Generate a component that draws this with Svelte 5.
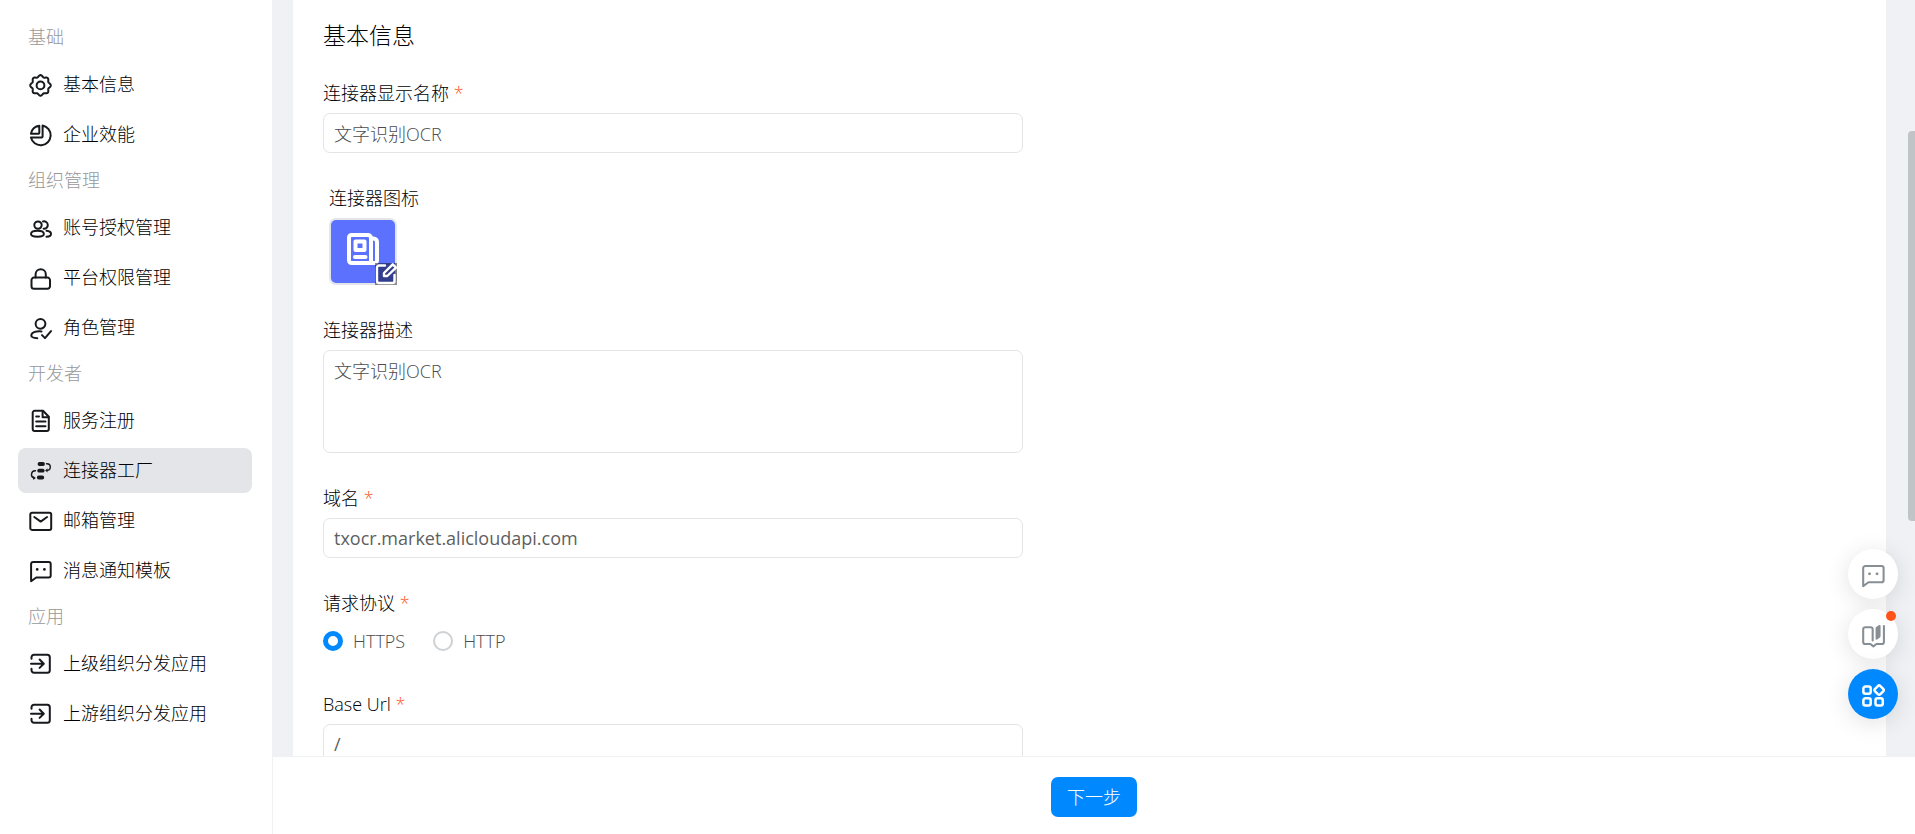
<script lang="ts">
  // Eight rounded teeth around the centre of a 24px box
  function gearPath(cx: number, cy: number, radius: number, depth: number) {
    const points: string[] = [];
    for (let i = 0; i < 96; i++) {
      const angle = (i / 96) * Math.PI * 2;
      const r = radius + depth * Math.cos(angle * 8);
      points.push(`${(cx + r * Math.cos(angle)).toFixed(2)} ${(cy + r * Math.sin(angle)).toFixed(2)}`);
    }
    return `M${points.join('L')}Z`;
  }

  type Icon = { lines: string[]; solid?: string[] };

  const icons: Record<string, Icon> = {
    gear: {
      lines: [gearPath(11.5, 12.4, 9.4, 0.9), 'M11.5 8.5a3.9 3.9 0 1 1 0 7.8a3.9 3.9 0 0 1 0-7.8z'],
    },
    pie: {
      lines: [
        'M13.6 2.4A10 10 0 1 1 1.9 14.4H12.6a1 1 0 0 0 1-1z',
        'M10.3 2.7V10a.8.8 0 0 1-.8.8H1.9C2.5 6.3 6 3 10.3 2.7z',
      ],
    },
    users: {
      lines: [
        'M9 5.4a3.7 3.7 0 1 1 0 7.4a3.7 3.7 0 0 1 0-7.4z',
        'M8.5 14.8c4.4 0 6.4 1.7 6.4 3.3s-2 2.7-6.4 2.7s-6.5-1.1-6.5-2.7s2.1-3.3 6.5-3.3z',
        'M14 5.5a3.7 3.7 0 1 1 .6 7.2',
        'M17.5 14.8c3 .3 4.5 1.6 4.5 3.2c0 1.7-1.6 2.6-4.5 2.8',
      ],
    },
    lock: {
      lines: [
        'M5 11.600H18.5a2.5 2.5 0 0 1 2.5 2.5V20.300a2.5 2.5 0 0 1-2.5 2.5H5A2.5 2.5 0 0 1 2.5 20.300V14.100A2.5 2.5 0 0 1 5 11.600z',
        'M6.600 11.600V8.300a5.1 5.1 0 0 1 10.2 0V11.600',
      ],
    },
    role: {
      lines: [
        'M11.5 2.9a4.9 4.9 0 1 1 0 9.8a4.9 4.9 0 0 1 0-9.8z',
        'M12.5 15.400C6.5 14.900 2.3 16.600 2.3 19.600c0 1.600 1.8 2.5 6 2.600',
        'M13 19.100l3 3l6-7',
      ],
    },
    doc: {
      lines: [
        'M14 1.8H5.7a2 2 0 0 0-2 2V20a2 2 0 0 0 2 2H17.8a2 2 0 0 0 2-2V7.8z',
        'M13.6 2.1V8.3H19.6',
        'M7.2 7.5H10M7.2 12.6H16.5M7.2 17.2H16.5',
      ],
    },
    connector: {
      lines: ['M17.5 4.8h.5a3.3 3.3 0 0 1 0 6.6h-.5', 'M6.5 11.8h-.5a3.7 3.7 0 0 0-1 7.2'],
      solid: [
        'M10.5 3.1h3.5a1.9 1.9 0 0 1 0 3.8h-3.5a1.9 1.9 0 0 1 0-3.8z',
        'M10.2 9.8h3.5a1.9 1.9 0 0 1 0 3.8h-3.5a1.9 1.9 0 0 1 0-3.8z',
        'M9.8 16.6h3.5a1.9 1.9 0 0 1 0 3.8H9.8a1.9 1.9 0 0 1 0-3.8z',
        'M16.2 11.5l2.3-2.3v4.4z',
        'M6.8 19l-2.6-2v3.9z',
      ],
    },
    mail: {
      lines: [
        'M3 3.700H20.5a1.7 1.7 0 0 1 1.7 1.7V19.2a1.7 1.7 0 0 1-1.7 1.7H3A1.7 1.7 0 0 1 1.3 19.2V5.400A1.7 1.7 0 0 1 3 3.700z',
        'M5.3 8L11.7 12.600L18.1 8',
      ],
    },
    message: {
      lines: ['M2.1 22.2V4.9a2 2 0 0 1 2-2H19.700a2 2 0 0 1 2 2V16.5a2 2 0 0 1-2 2H7.2z'],
      solid: [
        'M8.2 9a1.4 1.4 0 1 1 0 2.8a1.4 1.4 0 0 1 0-2.8z',
        'M15.4 9a1.4 1.4 0 1 1 0 2.8a1.4 1.4 0 0 1 0-2.8z',
      ],
    },
    enter: {
      lines: [
        'M2.5 6.8V5.2a2.5 2.5 0 0 1 2.5-2.5H18.3a2.5 2.5 0 0 1 2.5 2.5V18.2a2.5 2.5 0 0 1-2.5 2.5H5a2.5 2.5 0 0 1-2.5-2.5V16.7',
        'M2 11.7H14.5M10.6 7.5l4.2 4.2l-4.2 4.2',
      ],
    },
    book: {
      lines: [
        'M11.2 16.800V6a2 2 0 0 0-2-2H4.100a2 2 0 0 0-2 2V18.200a2 2 0 0 0 2 2H9l2.9 2.3l2.9-2.3H20a2 2 0 0 0 2-2V2.800',
      ],
      solid: ['M14 5.3a2 2 0 0 1 .9-1.7L17.400 2a.9.9 0 0 1 1.4.8V12.5a2 2 0 0 1-.9 1.7L15.400 15.800a.9.9 0 0 1-1.4-.8z'],
    },
    apps: {
      lines: [
        'M4.3 3.3h3a2 2 0 0 1 2 2v3a2 2 0 0 1-2 2h-3a2 2 0 0 1-2-2v-3a2 2 0 0 1 2-2z',
        'M4.3 14.7h3a2 2 0 0 1 2 2v3a2 2 0 0 1-2 2h-3a2 2 0 0 1-2-2v-3a2 2 0 0 1 2-2z',
        'M15.9 14.7h3a2 2 0 0 1 2 2v3a2 2 0 0 1-2 2h-3a2 2 0 0 1-2-2v-3a2 2 0 0 1 2-2z',
        'M16.2 2.9a1.7 1.7 0 0 1 2.4 0l2.7 2.7a1.7 1.7 0 0 1 0 2.4l-2.7 2.7a1.7 1.7 0 0 1-2.4 0l-2.7-2.7a1.7 1.7 0 0 1 0-2.4z',
      ],
    },
  };

  const menu = [
    {
      title: '基础',
      items: [
        { label: '基本信息', icon: 'gear' },
        { label: '企业效能', icon: 'pie' },
      ],
    },
    {
      title: '组织管理',
      items: [
        { label: '账号授权管理', icon: 'users' },
        { label: '平台权限管理', icon: 'lock' },
        { label: '角色管理', icon: 'role' },
      ],
    },
    {
      title: '开发者',
      items: [
        { label: '服务注册', icon: 'doc' },
        { label: '连接器工厂', icon: 'connector' },
        { label: '邮箱管理', icon: 'mail' },
        { label: '消息通知模板', icon: 'message' },
      ],
    },
    {
      title: '应用',
      items: [
        { label: '上级组织分发应用', icon: 'enter' },
        { label: '上游组织分发应用', icon: 'enter' },
      ],
    },
  ];

  let active = $state('连接器工厂');
  let name = $state('文字识别OCR');
  let description = $state('文字识别OCR');
  let domain = $state('txocr.market.alicloudapi.com');
  let protocol = $state('HTTPS');
  let baseUrl = $state('/');

  function select(event: MouseEvent, label: string) {
    event.preventDefault();
    active = label;
  }
</script>

{#snippet icon(key: string)}
  <svg class="icon {key}" viewBox="0 0 24 24" aria-hidden="true">
    {#each icons[key].lines as d}
      <path {d} />
    {/each}
    {#each icons[key].solid ?? [] as d}
      <path class="solid" {d} />
    {/each}
  </svg>
{/snippet}

<div class="layout">
  <nav class="sidebar">
    {#each menu as group}
      <h2 class="group-title">{group.title}</h2>
      <ul class="group">
        {#each group.items as item}
          <li>
            <a
              href="#menu"
              class="menu-item"
              class:active={active === item.label}
              onclick={(event) => select(event, item.label)}
            >
              {@render icon(item.icon)}
              <span>{item.label}</span>
            </a>
          </li>
        {/each}
      </ul>
    {/each}
  </nav>

  <div class="main">
    <div class="content">
      <form class="card" id="connector-form">
        <h1>基本信息</h1>

        <div class="field">
          <label for="name">连接器显示名称 <span class="required">*</span></label>
          <input id="name" class="text-input" type="text" bind:value={name} />
        </div>

        <div class="field picture-field">
          <label for="picture">连接器图标</label>
          <button id="picture" class="picture" type="button" aria-label="连接器图标">
            <svg class="news" viewBox="0 0 32 32" aria-hidden="true">
              <path d="M4.5 2H21a3 3 0 0 1 3 3V30H4.5A2.5 2.5 0 0 1 2 27.5V4.5A2.5 2.5 0 0 1 4.5 2z" />
              <path d="M24 5.5h2.5A3.5 3.5 0 0 1 30 9V27.5a2.5 2.5 0 0 1-2.5 2.5H23" />
              <path d="M8.5 8.5H17.5V17H8.5z" />
              <path d="M8 24H18.5" />
            </svg>
            <span class="edit">
              <svg viewBox="0 0 22 22" aria-hidden="true">
                <path d="M10 2.5H4a2 2 0 0 0-2 2V18a2 2 0 0 0 2 2H17.5a2 2 0 0 0 2-2V12" />
                <path d="M9 13V10L17.7 1.3L21 4.6L12.3 13z" />
              </svg>
            </span>
          </button>
        </div>

        <div class="field">
          <label for="description">连接器描述</label>
          <textarea id="description" class="text-input" bind:value={description}></textarea>
        </div>

        <div class="field">
          <label for="domain">域名 <span class="required">*</span></label>
          <input id="domain" class="text-input latin" type="text" bind:value={domain} />
        </div>

        <fieldset class="field">
          <legend>请求协议 <span class="required">*</span></legend>
          <div class="radios">
            {#each ['HTTPS', 'HTTP'] as option}
              <label class="radio">
                <input type="radio" name="protocol" value={option} bind:group={protocol} />
                {option}
              </label>
            {/each}
          </div>
        </fieldset>

        <div class="field">
          <label for="base-url">Base Url <span class="required">*</span></label>
          <input id="base-url" class="text-input latin" type="text" bind:value={baseUrl} />
        </div>
      </form>
      <div class="scroll-thumb"></div>
    </div>

    <footer>
      <button class="next" type="submit" form="connector-form">下一步</button>
    </footer>
  </div>

  <div class="floating">
    <button type="button" class="fab" aria-label="消息">{@render icon('message')}</button>
    <button type="button" class="fab badge" aria-label="文档">{@render icon('book')}</button>
    <button type="button" class="fab primary" aria-label="应用">{@render icon('apps')}</button>
  </div>
</div>

<style>
  :global(body) {
    margin: 0;
    background: #fff;
  }

  .layout {
    display: flex;
    height: 100vh;
    overflow: hidden;
    color: #000;
    font-family: 'Open Sans', 'Noto Sans CJK SC', sans-serif;
    font-size: 18px;
    font-weight: 300;
  }

  .layout * {
    box-sizing: border-box;
  }

  button,
  input,
  textarea {
    font: inherit;
  }

  .icon {
    flex: none;
    width: 24px;
    height: 24px;
    fill: none;
    stroke: currentColor;
    stroke-width: 2;
    stroke-linecap: round;
    stroke-linejoin: round;
  }

  .icon .solid {
    fill: currentColor;
    stroke: none;
  }

  .icon.connector {
    stroke-width: 1.4;
  }

  /* Sidebar */
  .sidebar {
    flex: none;
    width: 273px;
    padding: 14px 20px 0 18px;
    border-right: 1px solid #f0f1f3;
  }

  .group-title {
    height: 48px;
    margin: 0;
    padding-left: 10px;
    color: #96989a;
    font-size: 18px;
    font-weight: 300;
    line-height: 46px;
  }

  .group {
    display: flex;
    flex-direction: column;
    gap: 5px;
    margin: 0;
    padding: 0;
    list-style: none;
  }

  .menu-item {
    display: flex;
    align-items: center;
    gap: 10px;
    height: 45px;
    padding: 0 11px;
    border-radius: 8px;
    color: inherit;
    line-height: 24px;
    text-decoration: none;
  }

  .menu-item .icon {
    color: #171a1d;
  }

  .menu-item span {
    padding-bottom: 2px;
  }

  .menu-item.active {
    background: #e3e5e8;
  }

  /* Content */
  .main {
    display: flex;
    flex: 1;
    flex-direction: column;
    min-width: 0;
  }

  .content {
    position: relative;
    flex: 1;
    min-height: 0;
    padding: 0 29px 0 20px;
    overflow: hidden;
    background: #f0f1f4;
  }

  .card {
    padding: 19px 30px;
    background: #fff;
  }

  h1 {
    margin: 0 0 28px;
    font-size: 23px;
    font-weight: 300;
    line-height: 32px;
  }

  .field {
    display: flex;
    flex-direction: column;
    align-items: flex-start;
    gap: 6px;
    max-width: 700px;
    margin: 0 0 31px;
    padding: 0;
    border: 0;
  }

  .field > label,
  legend {
    padding: 0;
    line-height: 28px;
  }

  .required {
    color: #ff5219;
  }

  .text-input {
    width: 100%;
    height: 40px;
    padding: 0 10px 1px;
    border: 1px solid #e3e4e6;
    border-radius: 7px;
    outline: none;
    background: #fff;
    color: #4a4c4e;
  }

  .text-input.latin {
    color: #5d5f61;
    font-weight: 400;
  }

  textarea.text-input {
    height: 103px;
    padding: 7px 10px;
    line-height: 26px;
    resize: none;
  }

  .picture-field {
    padding-left: 6px;
  }

  .picture {
    position: relative;
    width: 68px;
    height: 67px;
    padding: 0;
    border: 2px solid #e3e5e8;
    border-radius: 7px;
    background: #5c72ff;
  }

  .picture svg {
    display: block;
    fill: none;
    stroke: #fff;
    stroke-linejoin: round;
    stroke-linecap: round;
  }

  .news {
    width: 32px;
    height: 32px;
    margin: 0 auto 5px;
    stroke-width: 4;
  }

  .edit {
    position: absolute;
    right: -2px;
    bottom: -2px;
    width: 22px;
    height: 22px;
    background: rgba(0, 0, 0, 0.45);
  }

  .edit svg {
    stroke-width: 2.4;
  }

  .radios {
    display: flex;
    gap: 28px;
    height: 36px;
    margin-top: 6px;
  }

  .radio {
    display: flex;
    align-items: center;
    gap: 10px;
    color: #4a4c4e;
  }

  .radio input {
    width: 20px;
    height: 20px;
    margin: 0;
    border: 2px solid #ced1d4;
    border-radius: 50%;
    appearance: none;
    background: #fff;
  }

  .radio input:checked {
    border: 5px solid #0089ff;
  }

  .scroll-thumb {
    position: absolute;
    top: 131px;
    right: 0;
    width: 7px;
    height: 390px;
    border-radius: 4px 0 0 4px;
    background: #c1c4c7;
  }

  footer {
    display: flex;
    flex: none;
    justify-content: center;
    padding: 20px 0 17px;
    border-top: 1px solid #f0f1f3;
    background: #fff;
  }

  .next {
    height: 40px;
    padding: 0 16px 2px;
    border: 0;
    border-radius: 7px;
    background: #0089ff;
    color: #fff;
  }

  /* Floating shortcuts */
  .floating {
    position: fixed;
    right: 17px;
    bottom: 115px;
    display: flex;
    flex-direction: column;
    gap: 10px;
  }

  .fab {
    position: relative;
    display: flex;
    align-items: center;
    justify-content: center;
    width: 50px;
    height: 50px;
    padding: 3px 0 0;
    border: 0;
    border-radius: 50%;
    background: #fff;
    box-shadow: 0 4px 24px rgba(0, 0, 0, 0.12);
    color: #878f95;
  }

  .fab .icon {
    width: 25px;
    height: 25px;
  }

  .fab.primary {
    background: #0089ff;
    color: #fff;
  }

  .fab.primary .icon {
    stroke-width: 2.4;
  }

  .fab.badge::after {
    position: absolute;
    top: 2px;
    right: 2px;
    width: 10px;
    height: 10px;
    border-radius: 50%;
    background: #ff5219;
    content: '';
  }
</style>
